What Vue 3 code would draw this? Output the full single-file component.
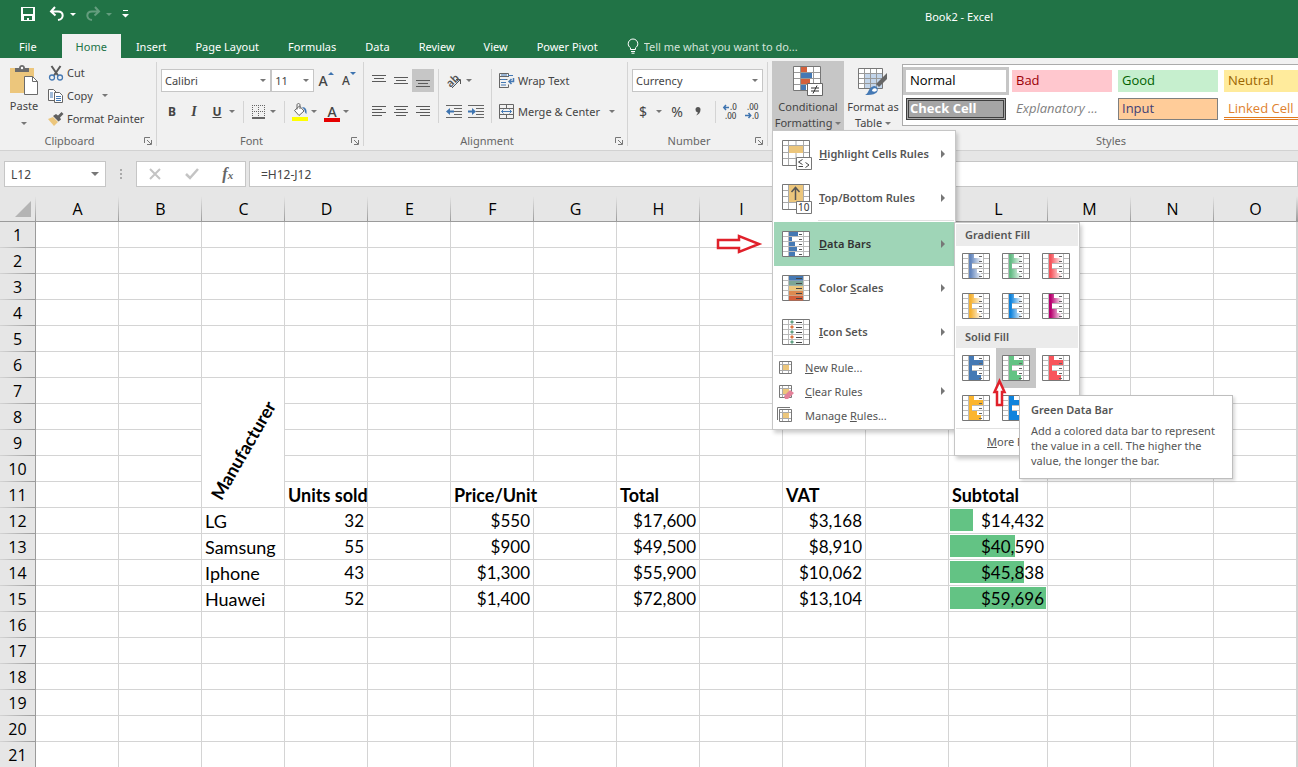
<template>
  <div class="excel">
    <header class="titlebar">
      <div class="quick-access">
        <button class="qa-btn" aria-label="Save">
          <svg width="16" height="16" viewBox="0 0 16 16">
            <path d="M1 1h14v14H1z" fill="#fff" />
            <path d="M3 2h10v6H3zM4 10h8v4H9v-2H7v2H4z" fill="#217346" />
          </svg>
        </button>
        <button class="qa-btn undo" aria-label="Undo">
          <svg width="16" height="16" viewBox="0 0 16 16">
            <path d="M6 1L2 5.500l4.500 4M2.500 5.500H9c6 0 6.500 7.500 0 8.500" fill="none" stroke="#fff" stroke-width="2" />
          </svg>
          <i class="caret white"></i>
        </button>
        <button class="qa-btn redo" aria-label="Redo">
          <svg width="16" height="16" viewBox="0 0 16 16">
            <path d="M10 1l4 4.500-4.500 4M13.500 5.500H7c-6 0-6.500 7.500 0 8.500" fill="none" stroke="#fff" stroke-width="2" />
          </svg>
          <i class="caret white"></i>
        </button>
        <button class="qa-btn" aria-label="Customize Quick Access Toolbar">
          <svg width="7" height="8" viewBox="0 0 7 8">
            <path d="M1 0h5v1H1zM0 4h7L3.500 7.500z" fill="#fff" />
          </svg>
        </button>
      </div>
      <div class="book-title">Book2 - Excel</div>
    </header>

    <nav class="tabs">
      <button
        v-for="tab in tabs"
        :key="tab"
        :class="['tab', { active: tab === activeTab, file: tab === 'File' }]"
        @click="activeTab = tab">
        {{ tab }}
      </button>
      <label class="tell-me">
        <svg width="12" height="16" viewBox="0 0 12 16" fill="none" stroke="#fff">
          <path d="M3.500 11.500V9.800C2 8.800 1.200 7.400 1.200 5.800a4.800 4.800 0 0 1 9.600 0c0 1.600-.8 3-2.300 4v1.700zM4 13.500h4M4.500 15.200h3" />
        </svg>
        <input type="text" placeholder="Tell me what you want to do..." aria-label="Tell me what you want to do">
      </label>
    </nav>

    <section class="ribbon">
      <div class="group clipboard">
        <div class="group-body">
          <button class="paste">
            <svg width="28" height="31" viewBox="0 0 28 31">
              <path d="M0 3h24v25H0z" fill="#ecc67c" />
              <path d="M5 3h4c0-4 6-4 6 0h4v4H5z" fill="#6b6b6b" />
              <circle cx="12" cy="3" r="1.200" fill="#fff" />
              <path d="M14.500 11.500h8l5 5v13h-13z" fill="#fff" stroke="#6b6b6b" />
              <path d="M22.500 11.500v5h5" fill="none" stroke="#6b6b6b" />
            </svg>
            <span>Paste</span>
            <i class="caret"></i>
          </button>
          <div class="stack">
            <button class="tool">
              <svg width="16" height="16" viewBox="0 0 16 16" fill="none">
                <path d="M3.500 1L10 10.500M12.500 1L6 10.500" stroke="#5a5a5a" stroke-width="2" />
                <circle cx="4" cy="12.500" r="2.500" stroke="#4579b4" stroke-width="1.300" />
                <circle cx="12" cy="12.500" r="2.500" stroke="#4579b4" stroke-width="1.300" />
              </svg>
              Cut
            </button>
            <button class="tool">
              <svg width="16" height="16" viewBox="0 0 16 16">
                <path d="M.5 1.500h5l3 3v8h-8z" fill="#fff" stroke="#666" />
                <path d="M2 5h3M2 7h3M2 9h3" stroke="#4579b4" />
                <path d="M6.500 4.500h5l3 3v7h-8z" fill="#fff" stroke="#666" />
                <path d="M8 8.500h5M8 10.500h5M8 12.500h5" stroke="#4579b4" />
              </svg>
              Copy <i class="caret"></i>
            </button>
            <button class="tool">
              <svg width="16" height="16" viewBox="0 0 16 16">
                <path d="M0 8l5-2 5 5-4 4z" fill="#ecc67c" />
                <path d="M5 5l3-2 2 1.500L13.500 1 15.500 3 12 6.500l1 2-2.500 2z" fill="#5f5f5f" />
              </svg>
              Format Painter
            </button>
          </div>
        </div>
        <div class="group-label">Clipboard<LaunchIcon /></div>
      </div>

      <div class="group font">
        <div class="group-body rows">
          <div class="row">
            <span class="combo wide">
              <select aria-label="Font"><option>Calibri</option></select><i class="caret"></i>
            </span>
            <span class="combo size">
              <select aria-label="Font size"><option>11</option></select><i class="caret"></i>
            </span>
            <button class="icon-btn grow" aria-label="Increase font size">
              <span class="glyph big">A</span><i class="mark up"></i>
            </button>
            <button class="icon-btn" aria-label="Decrease font size">
              <span class="glyph">A</span><i class="mark"></i>
            </button>
          </div>
          <div class="row">
            <button class="icon-btn"><b>B</b></button>
            <button class="icon-btn"><em>I</em></button>
            <button class="icon-btn underline"><u>U</u></button>
            <i class="caret"></i>
            <i class="bar"></i>
            <button class="icon-btn" aria-label="Borders">
              <svg width="14" height="14" viewBox="0 0 14 14" stroke="#666" fill="none">
                <path d="M0 .5h14M0 6.500h14M.5 0v12M6.500 0v12M12.500 0v12" stroke-dasharray="1 1" />
                <path d="M0 13h13" stroke-width="2" />
              </svg>
            </button>
            <i class="caret"></i>
            <i class="bar"></i>
            <button class="icon-btn" aria-label="Fill color">
              <svg width="18" height="18" viewBox="0 0 18 18">
                <path d="M3.500 7.500L8.500 3l4.500 5-5 4.500z" fill="#fff" stroke="#666" />
                <path d="M6 6.500V2c0-2 3-2 3 0v4" fill="none" stroke="#666" />
                <path d="M11 4c4 0 5 3 4.500 7-1.500-1-1.500-2-2-4z" fill="#4579b4" />
                <path d="M1 14h16v4H1z" fill="#ff0" />
              </svg>
            </button>
            <i class="caret"></i>
            <button class="icon-btn font-color" aria-label="Font color">
              <span class="glyph big">A</span><i class="red-line"></i>
            </button>
            <i class="caret"></i>
          </div>
        </div>
        <div class="group-label">Font<LaunchIcon /></div>
      </div>

      <div class="group alignment">
        <div class="group-body">
          <div class="align-grid">
            <button
              v-for="(d, i) in alignIcons"
              :key="i"
              :class="['icon-btn', { pressed: i === 2 }]"
              aria-label="Align">
              <svg width="14" height="14" viewBox="0 0 14 14" stroke="#5a5a5a"><path :d="d" /></svg>
            </button>
          </div>
          <i class="bar tall"></i>
          <div class="indent-grid">
            <button class="icon-btn orient" aria-label="Orientation">
              <svg width="18" height="18" viewBox="0 0 18 18">
                <text x="1" y="13" font-size="11" font-weight="600" fill="#555" transform="rotate(-45 7 9)">ab</text>
                <path d="M7 16l8-8M11 7.500h4.500V12" fill="none" stroke="#555" />
              </svg>
              <i class="caret"></i>
            </button>
            <button class="icon-btn" aria-label="Decrease indent">
              <svg width="16" height="14" viewBox="0 0 16 14">
                <path d="M0 .5h16M8 3.500h8M8 6.500h8M8 9.500h8M0 12.500h16" stroke="#666" />
                <path d="M0 6.500L4 3v2.500h4v2H4V10z" fill="#3e74b0" />
              </svg>
            </button>
            <button class="icon-btn" aria-label="Increase indent">
              <svg width="16" height="14" viewBox="0 0 16 14">
                <path d="M0 .5h16M8 3.500h8M8 6.500h8M8 9.500h8M0 12.500h16" stroke="#666" />
                <path d="M8 6.500L4 3v2.500H0v2h4V10z" fill="#3e74b0" />
              </svg>
            </button>
          </div>
          <i class="bar tall"></i>
          <div class="stack merge">
            <button class="tool">
              <svg width="16" height="16" viewBox="0 0 16 16" fill="none" stroke="#666">
                <path d="M.5 .5h9v3h-9zM.5 3v12M.5 6.500h8M.5 14.500h9v-3M9.500 1v3" />
                <path d="M2 2h6M2 9.500h5M2 12h5M9 2.500h5M2 6.500h5" stroke="#4579b4" />
                <path d="M14.500 5v3.500h-4M12.500 6l-2.500 2.500 2.500 2.500" stroke="#4579b4" stroke-width="1.500" />
              </svg>
              Wrap Text
            </button>
            <button class="tool">
              <svg width="16" height="16" viewBox="0 0 16 16" fill="none" stroke="#666">
                <path d="M.5 .5h14v14H.5zM.5 4.500h14M.5 10.500h14M7.500 .5v4M7.500 10.500v4" />
                <path d="M2.500 7.500h10M4.500 5.500l-2 2 2 2M10.500 5.500l2 2-2 2" stroke="#4579b4" />
              </svg>
              Merge &amp; Center <i class="caret"></i>
            </button>
          </div>
        </div>
        <div class="group-label">Alignment<LaunchIcon /></div>
      </div>

      <div class="group number">
        <div class="group-body rows">
          <div class="row">
            <span class="combo full">
              <select aria-label="Number format"><option>Currency</option></select><i class="caret"></i>
            </span>
          </div>
          <div class="row symbols">
            <button class="icon-btn">$</button>
            <i class="caret"></i>
            <button class="icon-btn percent">%</button>
            <button class="icon-btn comma" aria-label="Comma style">
              <svg width="6" height="9" viewBox="0 0 6 9"><path d="M.5 2.500a2.400 2.400 0 0 1 5 0C5.500 5.500 4 7.500 1 8.500c1-1 1.700-2 1.700-3.300A2.500 2.500 0 0 1 .5 2.500z" fill="#555" /></svg>
            </button>
            <i class="bar"></i>
            <button class="icon-btn" aria-label="Increase decimal">
              <svg width="18" height="23" viewBox="0 0 18 23">
                <text x="8" y="10" class="tiny">.0</text><text x="3" y="19" class="tiny">.00</text>
                <path d="M7 7.500H2M4 5L1.800 7.500 4 10" fill="none" stroke="#3e74b0" stroke-width="1.500" />
              </svg>
            </button>
            <button class="icon-btn" aria-label="Decrease decimal">
              <svg width="18" height="23" viewBox="0 0 18 23">
                <text x="3" y="10" class="tiny">.00</text><text x="8" y="19" class="tiny">.0</text>
                <path d="M1 15.500h5.500M4.500 13l2.200 2.500L4.500 18" fill="none" stroke="#3e74b0" stroke-width="1.500" />
              </svg>
            </button>
          </div>
        </div>
        <div class="group-label">Number<LaunchIcon /></div>
      </div>

      <div class="group styles">
        <div class="group-body">
          <div class="cond-wrap">
            <button class="large-btn pressed">
              <svg width="30" height="30" viewBox="0 0 30 30">
                <path d="M.5 .5h27v24H.5z" fill="#fff" stroke="#777" />
                <path d="M8 1h6v5H8zM8 13h9v5H8z" fill="#d4613c" />
                <path d="M8 7h11v5H8zM8 19h5v5H8z" fill="#4579b4" />
                <path d="M1 6.500h26M1 12.500h26M1 18.500h26M7.500 1v23M20.500 1v23" stroke="#999" />
                <path d="M14.500 17.500h15v12h-15z" fill="#fff" stroke="#666" />
                <path d="M18 22h8M18 25h8M24 19.500l-4 8" stroke="#333" fill="none" />
              </svg>
              <span>Conditional</span>
              <span>Formatting <i class="caret"></i></span>
            </button>

            <ul class="menu">
              <li v-for="item in ruleMenu" :key="item.icon" :class="['menu-item', item.icon]">
                <button :class="{ hot: item.icon === 'bars' }">
                  <svg width="30" :height="item.badge ? 30 : 26" :viewBox="item.badge ? '0 0 30 30' : '0 0 30 26'">
                    <path d="M.5 .5h27v25H.5z" fill="#fff" stroke="#777" />
                    <template v-if="item.icon === 'highlight'">
                      <path d="M1 5.500h26M1 12.500h26M1 18.500h26M6.500 1v24M21.500 1v24M14 1v4M14 13v12" stroke="#aaa" />
                      <path d="M7 6h14v7H7z" fill="#ecc67c" />
                      <path d="M14.500 17.500h15v12h-15z" fill="#fff" stroke="#777" />
                      <path d="M20.500 19.500l-4 2.500 4 2.500M16.500 26.500h4.500M23.500 22.500l3.500 2.500-3.500 2.500" fill="none" stroke="#444" />
                    </template>
                    <template v-else-if="item.icon === 'top'">
                      <path d="M7 1h14v17H7z" fill="#ecc67c" />
                      <path d="M1 6.500h6M1 12.500h6M1 18.500h26M21 6.500h6M21 12.500h6M6.500 1v24M21.500 1v24" stroke="#aaa" />
                      <path d="M13.500 16V4M9.500 8l4-4.500 4 4.500" fill="none" stroke="#555" stroke-width="1.500" />
                      <path d="M14.500 17.500h15v12h-15z" fill="#fff" stroke="#777" />
                      <text x="16" y="27" font-size="10" font-weight="400" fill="#333">10</text>
                    </template>
                    <template v-else-if="item.icon === 'bars'">
                      <path d="M7 1h9v4H7zM7 6h3v4H7zM7 11h6v4H7zM7 16h8v4H7zM7 21h6v4H7z" fill="#4579b4" />
                      <path d="M1 5.500h26M1 10.500h26M1 15.500h26M1 20.500h26M6.500 1v24M21.500 1v24" stroke="#bbb" />
                      <path d="M17 3.500h3M17 8.500h3M17 13.500h3M17 18.500h3M17 23.500h3" stroke="#555" />
                    </template>
                    <template v-else-if="item.icon === 'scales'">
                      <path d="M1 5.500h26M1 10.500h26M1 15.500h26M1 20.500h26M6.500 1v24M21.500 1v24" stroke="#bbb" />
                      <path v-for="(c, i) in scaleColors" :key="c" :d="`M7 ${i * 5 + 1}h14v4.500H7z`" :fill="c" />
                      <path d="M14 3.500h6M14 8.500h6M14 13.500h6M14 18.500h6M14 23.500h6" stroke="#444" />
                    </template>
                    <template v-else>
                      <path d="M1 5.500h26M1 10.500h26M1 15.500h26M1 20.500h26M6.500 1v24M21.500 1v24" stroke="#bbb" />
                      <path d="M9 2h2v2H9zM9 12h2v2H9zM9 22h2v2H9z" fill="#62a083" stroke="#62a083" />
                      <path d="M9 7h2v2H9zM9 17h2v2H9z" fill="#dd7440" stroke="#dd7440" />
                      <path d="M14 3.500h6M14 8.500h6M14 13.500h6M14 18.500h6M14 23.500h6" stroke="#444" />
                    </template>
                  </svg>
                  <span>{{ item.pre }}<u>{{ item.key }}</u>{{ item.post }}</span>
                  <i class="arrow"></i>
                </button>

                <template v-if="item.icon === 'bars'">
                  <svg class="pointer-right" width="46" height="20" viewBox="0 0 46 20">
                    <path d="M2 6h21V2l20 8-20 8v-4H2z" fill="#fff" stroke="#e0212b" stroke-width="2.500" />
                  </svg>
                  <div class="submenu">
                    <template v-for="section in barSections" :key="section.title">
                      <h4>{{ section.title }}</h4>
                      <div class="swatches">
                        <button
                          v-for="s in section.swatches"
                          :key="s.name"
                          :aria-label="s.name"
                          :class="['swatch', { chosen: s.name === 'Green Data Bar' }]">
                          <svg width="28" height="26" viewBox="0 0 28 26">
                            <defs>
                              <linearGradient :id="s.id" gradientUnits="userSpaceOnUse" x1="6" x2="20" y1="0" y2="0">
                                <stop offset="0.200" :stop-color="s.color" />
                                <stop offset="1" :stop-color="section.solid ? s.color : '#fff'" />
                              </linearGradient>
                            </defs>
                            <path d="M.5 .5h27v25H.5z" fill="#fff" stroke="#777" />
                            <path d="M1 5.500h26M1 10.500h26M1 15.500h26M1 20.500h26M6.500 1v24M21.500 1v24" stroke="#bbb" />
                            <path d="M7 1h5v4H7zM7 5h14v5H7zM7 10h3v6H7zM7 16h8v4H7zM7 20h12v5H7z" :fill="`url(#${s.id})`" />
                            <path d="M17 3.500h3M17 8.500h3M17 13.500h3M17 18.500h3M17 23.500h3" stroke="#666" />
                          </svg>
                          <svg
                            v-if="s.name === 'Green Data Bar'"
                            class="pointer-up"
                            width="15"
                            height="29"
                            viewBox="0 0 15 29">
                            <path d="M7.500 3l5 11H10v13H5V14H2.500z" fill="#fff" stroke="#e0212b" stroke-width="2.500" />
                          </svg>
                        </button>
                      </div>
                    </template>
                    <button class="more"><u>M</u>ore Rules...</button>
                    <div class="tooltip" role="tooltip">
                      <strong>Green Data Bar</strong>
                      <p>Add a colored data bar to represent<br>the value in a cell. The higher the<br>value, the longer the bar.</p>
                    </div>
                  </div>
                </template>
              </li>
              <li v-for="(item, i) in manageMenu" :key="item.key + i" class="menu-item small">
                <button>
                  <svg width="17" height="17" viewBox="0 0 17 17">
                    <path v-if="i === 2" d="M.5 13V.5H13" fill="none" stroke="#777" />
                    <path d="M2.500 2.500h12v12h-12z" fill="#fff" stroke="#777" />
                    <path d="M5.500 3v11M11.500 3v11M3 5.500h11M3 11.500h11" stroke="#aaa" />
                    <path d="M6 6h6v5H6z" fill="#ecc67c" />
                    <path v-if="i === 1" d="M7 13l6-6 4 3-6 6H8z" fill="#e4829a" />
                  </svg>
                  <span>{{ item.pre }}<u>{{ item.key }}</u>{{ item.post }}</span>
                  <i v-if="i === 1" class="arrow"></i>
                </button>
              </li>
            </ul>
          </div>

          <button class="large-btn format-table">
            <svg width="30" height="30" viewBox="0 0 30 30">
              <path d="M.5 2.500h24v20H.5z" fill="#fff" stroke="#777" />
              <path d="M7 8h17v14H7z" fill="#c3d5ea" />
              <path d="M1 7.500h23M1 12.500h23M1 17.500h23M6.500 3v19M12.500 3v19M18.500 3v19" stroke="#999" />
              <path d="M29 7v6l-8 8-3-3z" fill="#666" />
              <path d="M7 29c4-1 3-8 9-9 4 0 5 5 2 7-3 2-7 2-11 2z" fill="#4579b4" />
              <path d="M14 25c0-3 4-4 5-1-1 2-3 2-5 1z" fill="#fff" />
            </svg>
            <span>Format as</span>
            <span>Table <i class="caret"></i></span>
          </button>

          <div class="gallery">
            <button v-for="s in cellStyles" :key="s.name" :class="['cell-style', s.cls]">{{ s.name }}</button>
          </div>
        </div>
        <div class="group-label">Styles</div>
      </div>
    </section>

    <section class="formula-bar">
      <div class="name-box">
        <input v-model="cellName" aria-label="Name box"><i class="caret"></i>
      </div>
      <i class="dots"></i>
      <div class="fx-box">
        <button aria-label="Cancel">
          <svg width="12" height="12" viewBox="0 0 12 12"><path d="M1 1l10 10M11 1L1 11" stroke="#c4c4c4" stroke-width="2" /></svg>
        </button>
        <button aria-label="Enter">
          <svg width="14" height="12" viewBox="0 0 14 12"><path d="M1 6l4 4 8-9" fill="none" stroke="#c4c4c4" stroke-width="2.500" /></svg>
        </button>
        <button class="fx" aria-label="Insert function">f<sub>x</sub></button>
      </div>
      <input v-model="formula" class="formula" aria-label="Formula">
    </section>

    <table class="sheet">
      <colgroup>
        <col class="col-num">
        <col v-for="c in columns" :key="c" :class="c === 'L' ? 'col-wide' : 'col'">
        <col>
      </colgroup>
      <thead>
        <tr>
          <th class="corner"><i></i></th>
          <th v-for="c in columns" :key="c">{{ c }}</th>
          <th></th>
        </tr>
      </thead>
      <tbody>
        <tr v-for="r in 21" :key="r">
          <th>{{ r }}</th>
          <template v-for="c in columns" :key="c">
            <td v-if="c === 'C' && r === 7" rowspan="5" class="tilted"><span>Manufacturer</span></td>
            <td v-else-if="!(c === 'C' && r > 7 && r < 12)" :class="cellClass(c, r)">
              <i v-if="c === 'L' && cells[c + r] && r > 11" class="databar">
                <i :style="{ width: barWidth(cells[c + r]) }"></i>
              </i>
              <span v-if="cells[c + r]">{{ cells[c + r] }}</span>
            </td>
          </template>
          <td></td>
        </tr>
      </tbody>
    </table>
  </div>
</template>

<script setup>
import { ref, h } from "vue";

const tabs = ['File', 'Home', 'Insert', 'Page Layout', 'Formulas', 'Data', 'Review', 'View', 'Power Pivot'];
const activeTab = ref('Home');
const cellName = ref('L12');
const formula = ref('=H12-J12');

// small arrow in the corner of a ribbon group
const LaunchIcon = () => h('svg', { class: 'launch', width: 8, height: 8, viewBox: '0 0 8 8' }, [
  h('path', { d: 'M.5 6V.5H6M3 3l4 4M7.500 3v4.500H3', fill: 'none', stroke: '#777' })
]);

const alignIcons = [
  'M0 1.500h14M2 4.500h10M0 7.500h14',
  'M0 3.500h14M2 6.500h10M0 9.500h14',
  'M0 6.500h14M2 9.500h10M0 12.500h14',
  'M0 1.500h14M0 4.500h10M0 7.500h14M0 10.500h10',
  'M0 1.500h14M2 4.500h10M0 7.500h14M2 10.500h10',
  'M0 1.500h14M4 4.500h10M0 7.500h14M4 10.500h10'
];

const ruleMenu = [
  { icon: 'highlight', badge: true, pre: '', key: 'H', post: 'ighlight Cells Rules' },
  { icon: 'top', badge: true, pre: '', key: 'T', post: 'op/Bottom Rules' },
  { icon: 'bars', pre: '', key: 'D', post: 'ata Bars' },
  { icon: 'scales', pre: 'Color ', key: 'S', post: 'cales' },
  { icon: 'sets', pre: '', key: 'I', post: 'con Sets' }
];
const manageMenu = [
  { pre: '', key: 'N', post: 'ew Rule...' },
  { pre: '', key: 'C', post: 'lear Rules' },
  { pre: 'Manage ', key: 'R', post: 'ules...' }
];
const scaleColors = ['#4579b4', '#7ba596', '#ecc67c', '#dd8a50', '#d4613c'];

const barColors = [
  ['Blue', '#6486bd', '#4579b4'],
  ['Green', '#63bb84', '#63c384'],
  ['Red', '#f5545c', '#f8555c'],
  ['Orange', '#f5b233', '#fbb52f'],
  ['Light Blue', '#0f83dc', '#0f83dc'],
  ['Purple', '#b8006f', '#b8006f']
];
// the last solid swatch lies fully under the tooltip
const barSections = [
  {
    title: 'Gradient Fill',
    solid: false,
    swatches: barColors.map(([n, c], i) => ({ name: `${n} Gradient Bar`, id: `grad${i}`, color: c }))
  },
  {
    title: 'Solid Fill',
    solid: true,
    swatches: barColors.map(([n, , c], i) => ({ name: `${n} Data Bar`, id: `solid${i}`, color: c }))
  }
];

const cellStyles = [
  { name: 'Normal', cls: 'normal' },
  { name: 'Bad', cls: 'bad' },
  { name: 'Good', cls: 'good' },
  { name: 'Neutral', cls: 'neutral' },
  { name: 'Check Cell', cls: 'check' },
  { name: 'Explanatory ...', cls: 'explain' },
  { name: 'Input', cls: 'input' },
  { name: 'Linked Cell', cls: 'linked' }
];

const columns = 'ABCDEFGHIJKLMNO'.split('');
const cells = {
  D11: 'Units sold', F11: 'Price/Unit', H11: 'Total', J11: 'VAT', L11: 'Subtotal',
  C12: 'LG', D12: '32', F12: '$550', H12: '$17,600', J12: '$3,168', L12: '$14,432',
  C13: 'Samsung', D13: '55', F13: '$900', H13: '$49,500', J13: '$8,910', L13: '$40,590',
  C14: 'Iphone', D14: '43', F14: '$1,300', H14: '$55,900', J14: '$10,062', L14: '$45,838',
  C15: 'Huawei', D15: '52', F15: '$1,400', H15: '$72,800', J15: '$13,104', L15: '$59,696'
};

const cellClass = (c, r) => ({
  head: r === 11,
  num: r > 11 && c !== 'C',
  spill: c === 'F' && r === 11
});

const toNumber = (text) => Number(text.replace(/[$,]/g, ''));
const maxSubtotal = Math.max(...[12, 13, 14, 15].map((r) => toNumber(cells['L' + r])));
const barWidth = (text) => (toNumber(text) / maxSubtotal) * 100 + '%';
</script>

<style>
body {
  overflow: hidden;
}
</style>

<style scoped>
.excel {
  height: 100vh;
  overflow: hidden;
  font-family: "Noto Sans", "Open Sans", sans-serif;
  font-size: 11px;
  color: #444;
  background: #fff;
}

.excel * {
  box-sizing: border-box;
}

button,
input,
select {
  font: inherit;
  color: inherit;
  border: none;
  padding: 0;
  background: none;
  outline: none;
}

button {
  display: flex;
  align-items: center;
  justify-content: center;
  white-space: nowrap;
}

svg {
  flex: none;
  display: block;
  overflow: visible;
}

.caret {
  flex: none;
  display: inline-block;
  border: 3px solid transparent;
  border-top-color: #777;
  border-bottom: none;
}

.caret.white {
  border-top-color: #fff;
}

.bar {
  flex: none;
  width: 1px;
  height: 22px;
  background: #d4d4d4;
}

/* title and tabs */
.titlebar {
  display: flex;
  height: 34px;
  background: #217346;
  color: #fff;
}

.quick-access {
  display: flex;
  align-items: center;
  gap: 9px;
  height: 28px;
  padding-left: 20px;
}

.qa-btn {
  gap: 5px;
}

.qa-btn.undo {
  padding-left: 4px;
}

.qa-btn.redo {
  opacity: 0.3;
}

.qa-btn:last-child {
  padding-left: 1px;
}

.book-title {
  flex: 1;
  padding-right: 305px;
  line-height: 33px;
  text-align: right;
}

.tabs {
  display: flex;
  height: 24px;
  background: #217346;
  color: #fff;
}

.tab {
  padding: 0 14px;
  margin-right: 1px;
}

.tab.file {
  padding: 0 25px 0 19px;
  margin: 0;
}

.tab.active {
  background: #f1f1f1;
  color: #217346;
}

.tell-me {
  display: flex;
  align-items: center;
  gap: 5px;
  margin-left: 14px;
}

.tell-me input {
  width: 200px;
}

.tell-me input::placeholder {
  color: #d3e3da;
  opacity: 1;
}

/* ribbon */
.ribbon {
  display: flex;
  height: 93px;
  background: #f1f1f1;
  border-bottom: 1px solid #d2d2d2;
}

.group {
  flex: none;
  display: flex;
  flex-direction: column;
  position: relative;
}

.group:not(.styles)::after {
  content: "";
  position: absolute;
  top: 4px;
  right: 0;
  bottom: 4px;
  width: 1px;
  background: #d4d4d4;
}

.group-body {
  display: flex;
  height: 74px;
}

.group-label {
  display: flex;
  align-items: center;
  justify-content: center;
  position: relative;
  height: 20px;
  padding-right: 18px;
  color: #666;
}

.group-label :deep(.launch) {
  position: absolute;
  right: 5px;
  top: 7px;
}

.clipboard {
  width: 157px;
}

.font {
  width: 207px;
}

.alignment {
  width: 264px;
}

.number {
  width: 140px;
}

.styles {
  width: 704px;
}

.paste {
  flex-direction: column;
  justify-content: flex-start;
  width: 48px;
  padding-top: 7px;
}

.paste span {
  margin: 2px 0 8px;
  line-height: 16px;
}

.stack {
  display: flex;
  flex-direction: column;
  padding-top: 3px;
}

.tool {
  justify-content: flex-start;
  gap: 3px;
  height: 23px;
}

.tool .caret {
  margin-left: 6px;
}

.rows {
  flex-direction: column;
  padding: 11px 4px 0;
  gap: 8px;
}

.row {
  display: flex;
  align-items: center;
  height: 23px;
}

.combo {
  display: flex;
  align-items: center;
  height: 23px;
  padding: 0 4px 0 3px;
  background: #fff;
  border: 1px solid #c6c6c6;
}

.combo select {
  flex: 1;
  min-width: 0;
  appearance: none;
}

.combo.wide {
  width: 111px;
}

.combo.size {
  width: 43px;
}

.combo.full {
  width: 131px;
}

.icon-btn {
  position: relative;
  flex: none;
  width: 22px;
  height: 23px;
}

.icon-btn.grow {
  width: 24px;
}

.icon-btn.underline {
  width: 24px;
}

.icon-btn b,
.icon-btn u {
  font-size: 12px;
  font-weight: 700;
}

.icon-btn em {
  font-family: "Liberation Serif", serif;
  font-size: 14px;
  font-weight: 700;
}

.glyph {
  font-size: 12px;
  font-weight: 500;
}

.glyph.big {
  font-size: 14px;
}

.mark {
  align-self: flex-start;
  margin-top: 3px;
  border: 3px solid transparent;
  border-top: 3px solid #3e74b0;
  border-bottom: none;
}

.mark.up {
  border-top: none;
  border-bottom: 3px solid #3e74b0;
}

.font .row .bar {
  margin: 0 4px 0 8px;
}

.font .font-color {
  margin-left: 4px;
}

.red-line {
  position: absolute;
  left: 3px;
  bottom: 1px;
  width: 16px;
  height: 4px;
  background: #e60000;
}

.alignment .group-body {
  padding: 11px 4px 0;
}

.align-grid {
  display: grid;
  grid-template-columns: repeat(3, 22px);
  align-content: start;
  gap: 8px 0;
}

.pressed {
  background: #c6c6c6;
}

.bar.tall {
  height: 54px;
  margin: 0 4px;
}

.indent-grid {
  display: grid;
  grid-template-columns: repeat(2, 22px);
  align-content: start;
  gap: 8px 0;
}

.orient {
  grid-column: 1 / 3;
  width: 30px;
  gap: 3px;
}

.merge {
  gap: 8px;
  padding: 0 0 0 3px;
}

.symbols .icon-btn {
  font-size: 14px;
}

.symbols .bar {
  margin: 0 4px 0 7px;
}

.symbols .caret {
  margin: 0 4px 0 2px;
}

.symbols .comma {
  width: 20px;
}

.symbols .tiny {
  font-size: 8px;
  font-weight: 500;
  fill: #444;
}

.styles .group-body {
  padding: 3px 4px 0;
}

.styles .group-label {
  margin-right: 18px;
  padding: 0;
}

.cond-wrap {
  position: relative;
  height: 69px;
}

.large-btn {
  flex-direction: column;
  justify-content: flex-start;
  width: 72px;
  height: 69px;
  padding-top: 5px;
  line-height: 16px;
}

.large-btn svg {
  margin-bottom: 3px;
}

.large-btn .caret {
  vertical-align: 2px;
}

.format-table {
  width: 58px;
}

.gallery {
  display: grid;
  grid-template-columns: repeat(4, 100px);
  grid-auto-rows: 22px;
  gap: 6px;
  align-self: start;
  flex: 1;
  margin-top: 3px;
  padding: 5px 3px;
  border: 1px solid #ababab;
  background: #fff;
}

.cell-style {
  justify-content: flex-start;
  padding: 0 0 2px 4px;
  font-family: "Open Sans", sans-serif;
  font-size: 13px;
}

.normal {
  color: #000;
  box-shadow: 0 0 0 3px #c6c6c6;
}

.bad {
  background: #ffc7ce;
  color: #9c0006;
}

.good {
  background: #c6efce;
  color: #006100;
}

.neutral {
  background: #ffeb9c;
  color: #9c6500;
}

.check {
  padding-left: 1px;
  border: 3px double #3f3f3f;
  background: #a5a5a5;
  color: #fff;
  font-weight: 700;
}

.explain {
  color: #7f7f7f;
  font-style: italic;
}

.input {
  padding-left: 3px;
  border: 1px solid #7f7f7f;
  background: #ffcc99;
  color: #3f3f76;
}

.linked {
  padding-bottom: 0;
  border-bottom: 3px double #e07a20;
  color: #e0812e;
}

/* drop-down menu */
.menu {
  position: absolute;
  z-index: 2;
  top: 69px;
  left: 0;
  width: 184px;
  margin: 0;
  padding: 1px;
  list-style: none;
  color: #555;
  background: #fff;
  border: 1px solid #c6c6c6;
  box-shadow: 2px 3px 4px rgba(0, 0, 0, 0.2);
}

.menu-item {
  position: relative;
}

.menu-item > button {
  justify-content: flex-start;
  width: 100%;
  height: 44px;
  padding: 0 9px 0 8px;
  gap: 7px;
  font-weight: 600;
}

.menu-item > button.hot {
  background: #9fd5b7;
  color: #333;
}

.menu-item > button > span {
  padding-bottom: 2px;
}

.menu-item .arrow {
  margin-left: auto;
  border: 4px solid transparent;
  border-left-color: #777;
  border-right: none;
}

.menu-item.highlight svg,
.menu-item.top svg {
  margin-top: 2px;
}

.menu-item.top {
  padding-bottom: 2px;
  background: linear-gradient(#e1e1e1, #e1e1e1) 44px 44px / 100% 1px no-repeat;
}

.menu-item.sets {
  padding-bottom: 1px;
  border-bottom: 1px solid #e1e1e1;
}

.menu-item.small > button {
  height: 24px;
  padding: 0 9px 2px 3px;
  gap: 11px;
  font-weight: 400;
}

.menu-item.small > button > span {
  padding-bottom: 0;
}

.pointer-right {
  position: absolute;
  top: 12px;
  left: -58px;
}

.submenu {
  position: absolute;
  z-index: 3;
  top: 0;
  left: 180px;
  width: 126px;
  padding: 1px;
  background: #fff;
  border: 1px solid #c6c6c6;
  box-shadow: 2px 3px 4px rgba(0, 0, 0, 0.2);
}

.submenu h4 {
  height: 22px;
  margin: 0;
  padding-left: 9px;
  line-height: 22px;
  font-size: 11px;
  font-weight: 600;
  background: #ebebeb;
}

.swatches {
  display: grid;
  grid-template-columns: repeat(3, 40px);
}

.swatch {
  position: relative;
  height: 40px;
}

.swatch.chosen {
  background: #c6c6c6;
}

.pointer-up {
  position: absolute;
  z-index: 1;
  top: 30px;
  left: -4px;
}

.more {
  width: 100%;
  height: 26px;
  padding-left: 31px;
  justify-content: flex-start;
  border-top: 1px solid #e1e1e1;
}

.tooltip {
  position: absolute;
  top: 172px;
  left: 64px;
  width: 214px;
  height: 84px;
  padding: 6px 11px;
  line-height: 15px;
  color: #555;
  background: #fff;
  border: 1px solid #bebebe;
  box-shadow: 2px 2px 3px rgba(0, 0, 0, 0.15);
}

.tooltip strong {
  font-weight: 600;
}

.tooltip p {
  margin: 6px 0 0;
  white-space: nowrap;
}

/* formula bar */
.formula-bar {
  display: flex;
  align-items: center;
  height: 45px;
  padding: 1px 0 0 4px;
  background: #e6e6e6;
}

.name-box,
.fx-box,
.formula {
  height: 26px;
  background: #fff;
  border: 1px solid #c6c6c6;
}

.name-box {
  display: flex;
  align-items: center;
  width: 102px;
  padding: 0 6px;
}

.name-box input {
  flex: 1;
  min-width: 0;
  font-size: 12px;
}

.name-box .caret {
  border-width: 4px;
  border-bottom: none;
}

.dots {
  width: 2px;
  height: 10px;
  margin: 0 14px;
  background: repeating-linear-gradient(#aaa 0 2px, transparent 2px 4px);
}

.fx-box {
  display: flex;
  align-items: center;
  justify-content: space-around;
  width: 110px;
  margin-right: 3px;
}

.fx {
  align-items: baseline;
  font-family: "Liberation Serif", serif;
  font-size: 16px;
  font-style: italic;
  font-weight: 700;
  color: #666;
}

.fx sub {
  font-size: 11px;
}

.formula {
  flex: 1;
  min-width: 0;
  padding-left: 11px;
  font-size: 12px;
}

/* worksheet */
.sheet {
  table-layout: fixed;
  width: 100%;
  border-collapse: separate;
  border-spacing: 0;
  font-family: Lato, sans-serif;
  font-size: 18px;
  color: #000;
}

.col-num {
  width: 36px;
}

.col {
  width: 83px;
}

.col-wide {
  width: 99px;
}

.sheet th,
.sheet td {
  height: 26px;
  padding: 0;
  line-height: 24px;
  white-space: nowrap;
}

.sheet th {
  font-family: "Open Sans", sans-serif;
  font-size: 16px;
  font-weight: 400;
  background: #e6e6e6;
}

.sheet thead th {
  border-bottom: 1px solid #9b9b9b;
  background: linear-gradient(#e6e6e6, #9b9b9b) right / 1px 100% no-repeat #e6e6e6;
}

.sheet tbody th {
  border-right: 1px solid #9b9b9b;
  background: linear-gradient(90deg, #d4d4d4, #9b9b9b) bottom / 100% 1px no-repeat #e6e6e6;
}

.corner i {
  display: block;
  margin-left: 15px;
  border: 8px solid #b4b4b4;
  border-top-color: transparent;
  border-left-color: transparent;
  width: 16px;
}

.sheet td {
  position: relative;
  padding: 0 3px;
  border-right: 1px solid #d4d4d4;
  border-bottom: 1px solid #d4d4d4;
}

.sheet td span {
  position: relative;
}

.sheet .head {
  font-weight: 700;
}

.sheet .num {
  font-size: 17px;
  text-align: right;
}

.sheet .spill {
  border-right-color: transparent;
}

.sheet .tilted {
  padding: 14px 0 0;
  text-align: center;
  font-weight: 700;
}

.tilted span {
  display: inline-block;
  margin: 0 -20px;
  transform: rotate(-60deg);
}

.databar {
  position: absolute;
  top: 1px;
  right: 1px;
  bottom: 2px;
  left: 1px;
}

.databar i {
  display: block;
  height: 100%;
  background: #63c384;
}
</style>
